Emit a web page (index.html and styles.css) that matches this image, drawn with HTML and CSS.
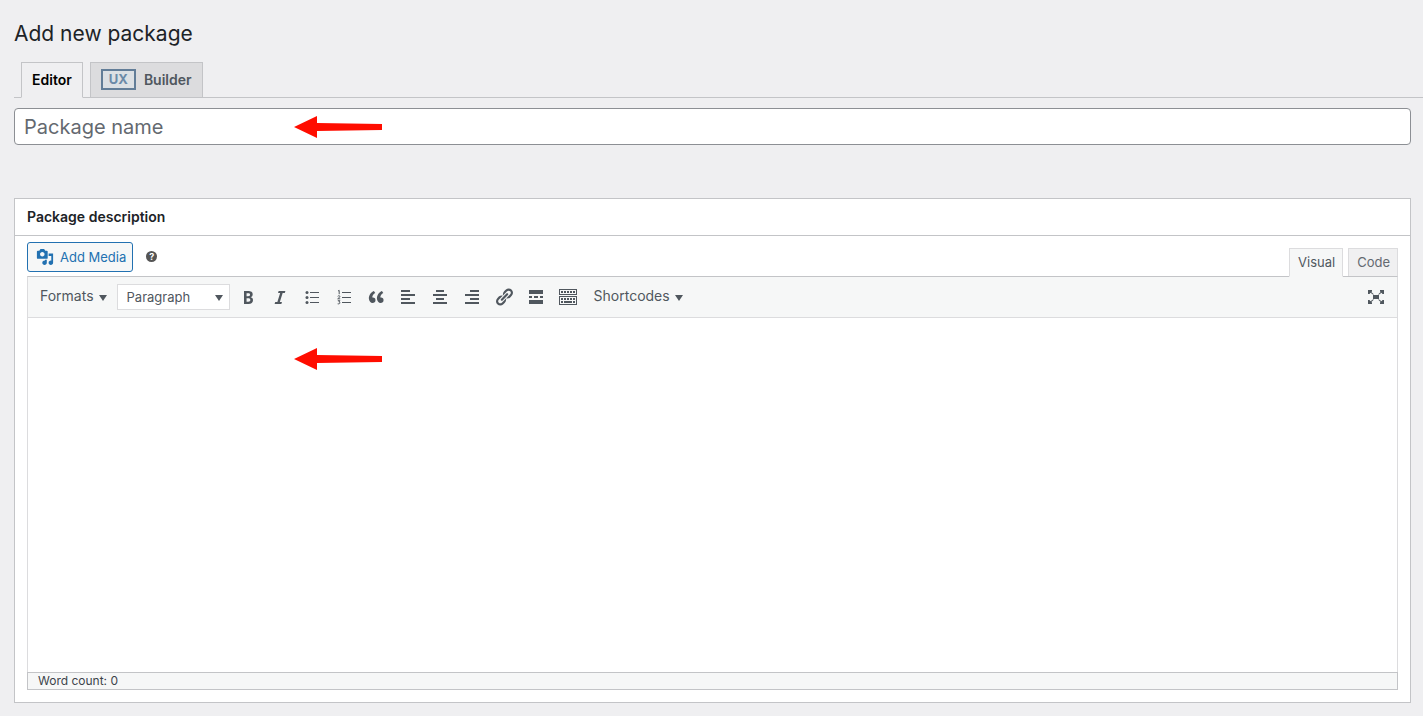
FILE: index.html
```html
<!DOCTYPE html>
<html lang="en">
<head>
<meta charset="utf-8">
<meta name="viewport" content="width=device-width, initial-scale=1">
<title>Add new package</title>
<link rel="stylesheet" href="styles.css">
</head>
<body>
<main class="page">
  <h1 class="page-title">Add new package</h1>

  <nav class="mode-tabs">
    <a class="mode-tab mode-tab-active" href="#editor">Editor</a>
    <a class="mode-tab" href="#builder"><span class="ux-badge">UX</span>Builder</a>
  </nav>

  <div class="title-field">
    <input class="title-input" type="text" placeholder="Package name" aria-label="Package name">
    <svg class="pointer" viewBox="0 0 88 22" aria-hidden="true"><path d="M0 11 23 0v7l65 1v6l-65 1v7z"/></svg>
  </div>

  <section class="panel">
    <h2 class="panel-title">Package description</h2>
    <div class="panel-body">
      <div class="editor-tools">
        <button class="media-button" type="button">
          <svg class="media-icon" viewBox="0 0 20 20" aria-hidden="true"><path d="M13 11V4c0-.55-.45-1-1-1h-1.67L9 1H5L3.67 3H2c-.55 0-1 .45-1 1v7c0 .55.45 1 1 1h10c.55 0 1-.45 1-1zM7 4.5c1.38 0 2.5 1.12 2.5 2.5S8.38 9.5 7 9.5 4.5 8.38 4.5 7 5.62 4.5 7 4.5zM14 6h5v10.5c0 1.38-1.12 2.5-2.5 2.5S14 17.88 14 16.5s1.12-2.5 2.5-2.5c.17 0 .34.02.5.05V9h-3V6zm-4 8.05V13h2v3.5c0 1.38-1.12 2.5-2.5 2.5S7 17.88 7 16.5 8.12 14 9.5 14c.17 0 .34.02.5.05z"/></svg>
          Add Media
        </button>
        <button class="help-button" type="button" title="Help">?</button>
        <div class="view-tabs">
          <button class="view-tab view-tab-active" type="button">Visual</button>
          <button class="view-tab" type="button">Code</button>
        </div>
      </div>

      <div class="editor">
        <div class="toolbar">
          <button class="menu-button" type="button">Formats<svg class="caret" viewBox="0 0 8 6" aria-hidden="true"><path d="M0 0h8L4 6z"/></svg></button>
          <div class="block-select">
            <select class="block-select-input" aria-label="Block format">
              <option>Paragraph</option>
              <option>Heading 1</option>
              <option>Heading 2</option>
            </select>
            <svg class="caret block-select-caret" viewBox="0 0 8 6" aria-hidden="true"><path d="M0 0h8L4 6z"/></svg>
          </div>
          <button class="tool" type="button" title="Bold"><svg class="icon" viewBox="0 0 20 20"><path d="M6 4v13h4.54c1.37 0 2.46-.33 3.26-1 .8-.66 1.2-1.58 1.2-2.77 0-.84-.17-1.51-.51-2.01s-.9-.85-1.67-1.03v-.09c.57-.1 1.02-.4 1.36-.9s.51-1.13.51-1.91c0-1.14-.39-1.98-1.17-2.5C12.75 4.26 11.5 4 9.78 4H6zm2.57 5.15V6.26h1.36c.73 0 1.27.11 1.61.32.34.22.51.58.51 1.07 0 .54-.16.92-.47 1.15s-.82.35-1.51.35h-1.5zm0 2.19h1.6c1.44 0 2.16.53 2.16 1.61 0 .6-.17 1.05-.51 1.34s-.86.43-1.57.43H8.57v-3.38z"/></svg></button>
          <button class="tool" type="button" title="Italic"><svg class="icon" viewBox="0 0 20 20"><path d="M14.78 6h-2.13l-2.8 9h2.12l-.62 2H4.6l.62-2h2.14l2.8-9H8.03l.62-2h6.75z"/></svg></button>
          <button class="tool" type="button" title="Bulleted list"><svg class="icon" viewBox="0 0 20 20"><circle cx="5" cy="5.5" r="1.5"/><circle cx="5" cy="10.5" r="1.5"/><circle cx="5" cy="15.5" r="1.5"/><path d="M8 5h9v1H8zM8 10h9v1H8zM8 15h9v1H8z"/></svg></button>
          <button class="tool" type="button" title="Numbered list"><svg class="icon" viewBox="0 0 20 20"><path d="M8 5h9v1H8zM8 10h9v1H8zM8 15h9v1H8z"/><path class="stroke" d="M4 4l1.2-.6V7.200M3.700 9.300c.8-.9 2.400-.6 2.200.4-.1.700-1.500 1.300-2.200 2.100h2.500M3.800 13.700h2.100l-1 1.300c1.600 0 1.500 2.300-1.200 1.800"/></svg></button>
          <button class="tool" type="button" title="Blockquote"><svg class="icon" viewBox="0 0 20 20"><path d="M9.49 13.22c0-.74-.2-1.38-.61-1.9-.62-.78-1.83-.88-2.53-.72-.29-1.65 1.11-3.75 2.92-4.65L7.88 4c-2.73 1.3-5.42 4.28-4.96 8.05C3.21 14.43 4.59 16 6.54 16c.85 0 1.56-.25 2.12-.75s.83-1.18.83-2.03zm8.05 0c0-.74-.2-1.38-.61-1.9-.63-.78-1.83-.88-2.53-.72-.29-1.65 1.11-3.75 2.92-4.65L15.93 4c-2.73 1.3-5.41 4.28-4.95 8.05.29 2.38 1.66 3.95 3.61 3.95.85 0 1.56-.25 2.12-.75s.83-1.18.83-2.03z"/></svg></button>
          <button class="tool" type="button" title="Align left"><svg class="icon" viewBox="0 0 20 20"><path d="M12 5V3H3v2h9zm5 4V7H3v2h14zm-5 4v-2H3v2h9zm5 4v-2H3v2h14z"/></svg></button>
          <button class="tool" type="button" title="Align center"><svg class="icon" viewBox="0 0 20 20"><path d="M14 5V3H6v2h8zm3 4V7H3v2h14zm-3 4v-2H6v2h8zm3 4v-2H3v2h14z"/></svg></button>
          <button class="tool" type="button" title="Align right"><svg class="icon" viewBox="0 0 20 20"><path d="M17 5V3H8v2h9zm0 4V7H3v2h14zm0 4v-2H8v2h9zm0 4v-2H3v2h14z"/></svg></button>
          <button class="tool" type="button" title="Insert link"><svg class="icon" viewBox="0 0 20 20"><path d="M17.740 2.760c1.680 1.690 1.680 4.410 0 6.100l-1.530 1.520c-1.120 1.120-2.700 1.470-4.140 1.090l2.620-2.610.76-.77.76-.76c.84-.84.84-2.200 0-3.040-.84-.85-2.200-.85-3.040 0l-.77.76-3.380 3.380c-.37-1.440-.02-3.020 1.100-4.140l1.520-1.530c1.690-1.680 4.420-1.680 6.100 0zM8.590 13.430l5.340-5.340c.42-.42.42-1.100 0-1.520-.44-.43-1.130-.39-1.530 0l-5.330 5.340c-.42.42-.42 1.100 0 1.520.44.43 1.130.39 1.520 0zm-.76 2.290l4.140-4.150c.38 1.440.03 3.020-1.090 4.140l-1.520 1.530c-1.690 1.680-4.410 1.680-6.100 0-1.680-1.680-1.680-4.420 0-6.100l1.530-1.520c1.120-1.120 2.700-1.470 4.140-1.100l-4.140 4.150c-.85.84-.85 2.200 0 3.050.84.84 2.200.84 3.040 0z"/></svg></button>
          <button class="tool" type="button" title="Read more"><svg class="icon" viewBox="0 0 20 20"><path d="M17 7V3H3v4h14zM6 11V9H3v2h3zm6 0V9H8v2h4zm5 0V9h-3v2h3zm0 6v-4H3v4h14z"/></svg></button>
          <button class="tool" type="button" title="Toolbar toggle"><svg class="icon" viewBox="0 0 20 20"><path fill-rule="evenodd" d="M1 2h18v6H1zM2 3v4h16V3zM1 9h18v9H1zM2 10v7h16v-7z"/><path d="M3 4h2v2H3zM6 4h2v2H6zM9 4h2v2H9zM12 4h2v2h-2zM15 4h2v2h-2zM3 11h2v2H3zM6 11h2v2H6zM9 11h2v2H9zM12 11h2v2h-2zM15 11h2v2h-2zM3 14h2v2H3zM6 14h8v2H6zM15 14h2v2h-2z"/></svg></button>
          <button class="menu-button" type="button">Shortcodes<svg class="caret" viewBox="0 0 8 6" aria-hidden="true"><path d="M0 0h8L4 6z"/></svg></button>
          <button class="tool tool-end" type="button" title="Fullscreen"><svg class="icon" viewBox="0 0 20 20"><path d="M7 8h6v4H7zM2 3h4v1.500L5.300 5 7.800 7.200l-.6.600L4.500 5.800 3.500 7H2zM18 3h-4v1.500l.7.500-2.500 2.200.6.600 2.700-2 1 1.200H18zM2 17h4v-1.500L5.300 15l2.500-2.200-.6-.6-2.700 2-1-1.200H2zM18 17h-4v-1.500l.7-.5-2.500-2.200.6-.6 2.700 2 1-1.200H18z"/></svg></button>
        </div>
        <div class="writing-area">
          <textarea class="content-input" aria-label="Package description"></textarea>
          <svg class="pointer" viewBox="0 0 88 22" aria-hidden="true"><path d="M0 11 23 0v7l65 1v6l-65 1v7z"/></svg>
        </div>
        <div class="status-bar">Word count: 0</div>
      </div>
    </div>
  </section>
</main>
</body>
</html>
```
FILE: styles.css
```css
* {
  box-sizing: border-box;
}

body {
  margin: 0;
  background: #efeff1;
  color: #1d2327;
  font: 13px/18px Inter, "Liberation Sans", sans-serif;
}

button,
input,
select,
textarea {
  font: inherit;
}

button {
  cursor: pointer;
}

.page {
  display: flex;
  flex-direction: column;
  min-height: 100vh;
  padding: 19px 12px 13px 14px;
}

.page-title {
  margin: 0 0 13px;
  font-size: 21px;
  font-weight: 400;
  line-height: 30px;
}

.mode-tabs {
  display: flex;
  gap: 7px;
  margin-right: -12px;
  padding-left: 7px;
  border-bottom: 1px solid #c3c4c7;
}

.mode-tab {
  display: flex;
  align-items: center;
  gap: 8px;
  height: 36px;
  margin-bottom: -1px;
  padding: 0 10px 1px;
  border: 1px solid #c3c4c7;
  background: #dcdcde;
  color: #50575e;
  font-size: 14px;
  font-weight: 600;
  text-decoration: none;
}

.mode-tab-active {
  border-bottom-color: #efeff1;
  background: #efeff1;
  color: #000;
}

.ux-badge {
  padding: 0 6px;
  border: 2px solid #627d98;
  background: #dce0e4;
  color: #6b8aa8;
  font-size: 13px;
  font-weight: 700;
  line-height: 17px;
}

.title-field {
  position: relative;
  margin: 10px 0 53px;
}

.title-input {
  display: block;
  width: 100%;
  height: 37px;
  padding: 1px 9px 0;
  border: 1px solid #8c8f94;
  border-radius: 4px;
  background: #fff;
  color: #2c3338;
  font-size: 20px;
}

.title-input::placeholder {
  color: #646970;
  opacity: 1;
}

/* Red arrows laid over the two fields to fill in */
.pointer {
  position: absolute;
  top: 8px;
  left: 280px;
  width: 88px;
  height: 22px;
  fill: #ff0d00;
  pointer-events: none;
}

.panel {
  display: flex;
  flex: 1;
  flex-direction: column;
  border: 1px solid #c3c4c7;
  background: #fff;
}

.panel-title {
  margin: 0;
  padding: 8px 12px;
  border-bottom: 1px solid #c3c4c7;
  font-size: 14px;
  font-weight: 600;
  line-height: 20px;
}

.panel-body {
  display: flex;
  flex: 1;
  flex-direction: column;
  padding: 6px 12px 12px;
}

.editor-tools {
  display: flex;
  align-items: flex-start;
}

.media-button {
  display: flex;
  align-items: center;
  gap: 6px;
  height: 30px;
  margin-bottom: 4px;
  padding: 0 6px 0 8px;
  border: 1px solid #2271b1;
  border-radius: 3px;
  background: #f6f7f7;
  color: #2271b1;
}

.media-icon {
  width: 18px;
  height: 18px;
  fill: #2271b1;
}

.help-button {
  width: 11px;
  height: 11px;
  margin: 9px 0 0 13px;
  padding: 0;
  border: 0;
  border-radius: 50%;
  background: #555;
  color: #fff;
  font-size: 9px;
  font-weight: 700;
  line-height: 11px;
}

.view-tabs {
  display: flex;
  align-self: flex-end;
  gap: 5px;
  margin-left: auto;
}

.view-tab {
  height: 29px;
  margin-bottom: -1px;
  padding: 0 7px 1px 8px;
  border: 1px solid #dcdcde;
  border-bottom-color: #c3c4c7;
  background: #f0f0f1;
  color: #646970;
}

.view-tab-active {
  position: relative;
  border-bottom-color: #f6f7f7;
  background: #f6f7f7;
  color: #50575e;
}

.editor {
  display: flex;
  flex: 1;
  flex-direction: column;
  border: 1px solid #dcdcde;
  border-top-color: #c3c4c7;
  border-bottom: 0;
}

.toolbar {
  display: flex;
  align-items: center;
  gap: 4px;
  height: 41px;
  padding: 0 7px 0 4px;
  border-bottom: 1px solid #dcdcde;
  background: #f6f7f7;
}

.menu-button {
  display: flex;
  align-items: center;
  gap: 5px;
  padding: 4px 6px 6px 8px;
  border: 0;
  background: none;
  color: #50575e;
  font-size: 14px;
}

.caret {
  width: 8px;
  height: 6px;
  margin-top: 3px;
  fill: #50575e;
}

.block-select {
  position: relative;
}

.block-select-input {
  display: block;
  width: 113px;
  height: 26px;
  padding: 0 9px 1px;
  border: 1px solid #dcdcde;
  border-radius: 0;
  appearance: none;
  background: #fff;
  color: #50575e;
}

.block-select-caret {
  position: absolute;
  top: 8px;
  right: 7px;
  pointer-events: none;
}

.tool {
  display: grid;
  place-items: center;
  width: 28px;
  height: 28px;
  padding: 0;
  border: 0;
  background: none;
}

.tool-end {
  margin-left: auto;
}

.icon {
  width: 20px;
  height: 20px;
  fill: #50575e;
}

.stroke {
  fill: none;
  stroke: #50575e;
  stroke-width: 1;
}

.writing-area {
  position: relative;
  display: flex;
  flex: 1;
}

.writing-area .pointer {
  top: 30px;
  left: 266px;
}

.content-input {
  flex: 1;
  min-height: 200px;
  padding: 10px;
  border: 0;
  resize: none;
  background: #fff;
}

.status-bar {
  margin: 0 -1px;
  padding: 0 10px;
  border: 1px solid #c3c4c7;
  background: #f6f7f7;
  color: #3c434a;
  font-size: 12px;
  line-height: 16px;
}
```
